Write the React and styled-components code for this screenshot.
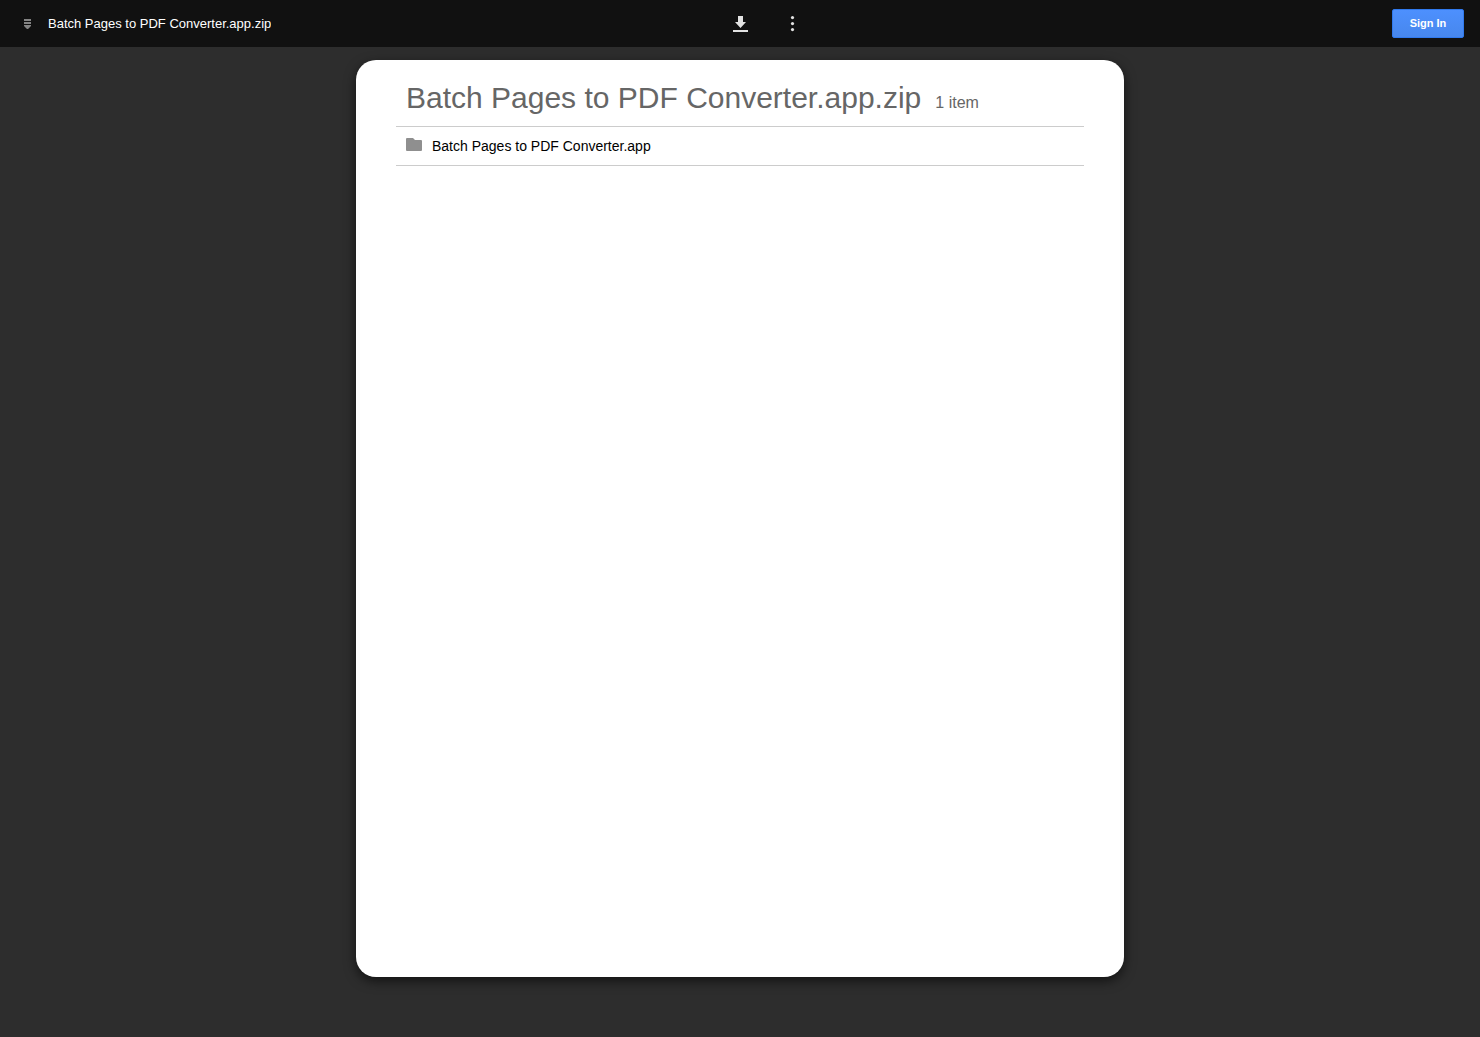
import React from 'react';
import styled, { createGlobalStyle } from 'styled-components';

const GlobalStyle = createGlobalStyle`
    * {
        box-sizing: border-box;
    }
    body {
        margin: 0;
        background: #2d2d2d;
        font-family: "Liberation Sans", Arial, sans-serif;
    }
`;

const Page = styled.div`
    min-height: 100vh;
    display: flex;
    flex-direction: column;
`;

const Toolbar = styled.header`
    height: 47px;
    padding: 0 16px;
    display: grid;
    grid-template-columns: 1fr 52px 1fr;
    align-items: center;
    background: #111;
`;

const FileInfo = styled.div`
    min-width: 0;
    display: flex;
    align-items: center;
    gap: 8px;
`;

const FileIcon = styled.svg`
    width: 24px;
    height: 24px;
    flex: none;
    fill: #848484;
`;

const FileName = styled.span`
    color: #fff;
    font-size: 13px;
    line-height: 16px;
    white-space: nowrap;
    overflow: hidden;
    text-overflow: ellipsis;
`;

const IconButton = styled.button`
    width: 52px;
    height: 40px;
    padding: 0;
    display: flex;
    align-items: center;
    justify-content: center;
    border: none;
    background: transparent;
    cursor: pointer;

    svg {
        width: 16px;
        height: 16px;
        fill: #e3e3e3;
    }
`;

const Actions = styled.div`
    display: flex;
    align-items: center;
    justify-content: space-between;
`;

const SignIn = styled.a`
    width: 72px;
    height: 29px;
    border: 1px solid #3079ed;
    border-radius: 2px;
    background: linear-gradient(#4d90fe, #4787ed);
    color: #fff;
    font-size: 11px;
    font-weight: bold;
    line-height: 27px;
    text-align: center;
    text-decoration: none;
`;

const Viewer = styled.main`
    flex: 1;
    display: flex;
    justify-content: center;
    align-items: stretch;
    padding: 13px 16px 60px;
`;

const Sheet = styled.section`
    width: 100%;
    max-width: 768px;
    padding: 16px 40px;
    border-radius: 20px;
    background: #fff;
    box-shadow: 0 4px 12px rgba(0, 0, 0, 0.6);
`;

const Heading = styled.div`
    height: 50px;
    padding: 0 10px;
    display: flex;
    align-items: baseline;
    gap: 14px;
    color: #666;
`;

const Title = styled.h1`
    margin: 0;
    font-size: 30px;
    font-weight: normal;
    line-height: 44px;
`;

const Count = styled.span`
    font-size: 16px;
    line-height: 20px;
`;

const Entries = styled.ul`
    margin: 0;
    padding: 0;
    list-style: none;
    border-top: 1px solid #ccc;
`;

const Entry = styled.li`
    height: 39px;
    padding: 0 10px;
    display: flex;
    align-items: center;
    gap: 10px;
    border-bottom: 1px solid #ccc;
`;

const FolderIcon = styled.svg`
    width: 16px;
    height: 16px;
    flex: none;
    fill: #8f8f8f;
`;

const EntryLink = styled.a`
    color: #000;
    font-size: 14px;
    line-height: 20px;
    text-decoration: none;
`;

const App = () => {
    return (
        <Page>
            <GlobalStyle />
            <Toolbar>
                <FileInfo>
                    <FileIcon viewBox="0 0 24 24" aria-hidden="true">
                        <path d="M8 7h7v2H8zM8 10h7v2H8zM8 13h7v1l-3 3h-1l-3-3z" />
                    </FileIcon>
                    <FileName>Batch Pages to PDF Converter.app.zip</FileName>
                </FileInfo>
                <IconButton type="button" aria-label="Download">
                    <svg viewBox="0 0 16 16">
                        <path d="M6 0h5v6h3L8.5 12 3 6h3zM1 14h15v2H1z" />
                    </svg>
                </IconButton>
                <Actions>
                    <IconButton type="button" aria-label="More actions">
                        <svg viewBox="0 0 16 16">
                            <circle cx="8.5" cy="1.6" r="1.6" />
                            <circle cx="8.5" cy="7.6" r="1.6" />
                            <circle cx="8.5" cy="13.6" r="1.6" />
                        </svg>
                    </IconButton>
                    <SignIn href="#signin">Sign In</SignIn>
                </Actions>
            </Toolbar>
            <Viewer>
                <Sheet>
                    <Heading>
                        <Title>Batch Pages to PDF Converter.app.zip</Title>
                        <Count>1 item</Count>
                    </Heading>
                    <Entries>
                        <Entry>
                            <FolderIcon viewBox="0 0 16 16" aria-hidden="true">
                                <path d="M1 0h6l2 2h6q1 0 1 1v9q0 1-1 1H1q-1 0-1-1V1q0-1 1-1z" />
                            </FolderIcon>
                            <EntryLink href="#folder">Batch Pages to PDF Converter.app</EntryLink>
                        </Entry>
                    </Entries>
                </Sheet>
            </Viewer>
        </Page>
    );
};

export default App;
